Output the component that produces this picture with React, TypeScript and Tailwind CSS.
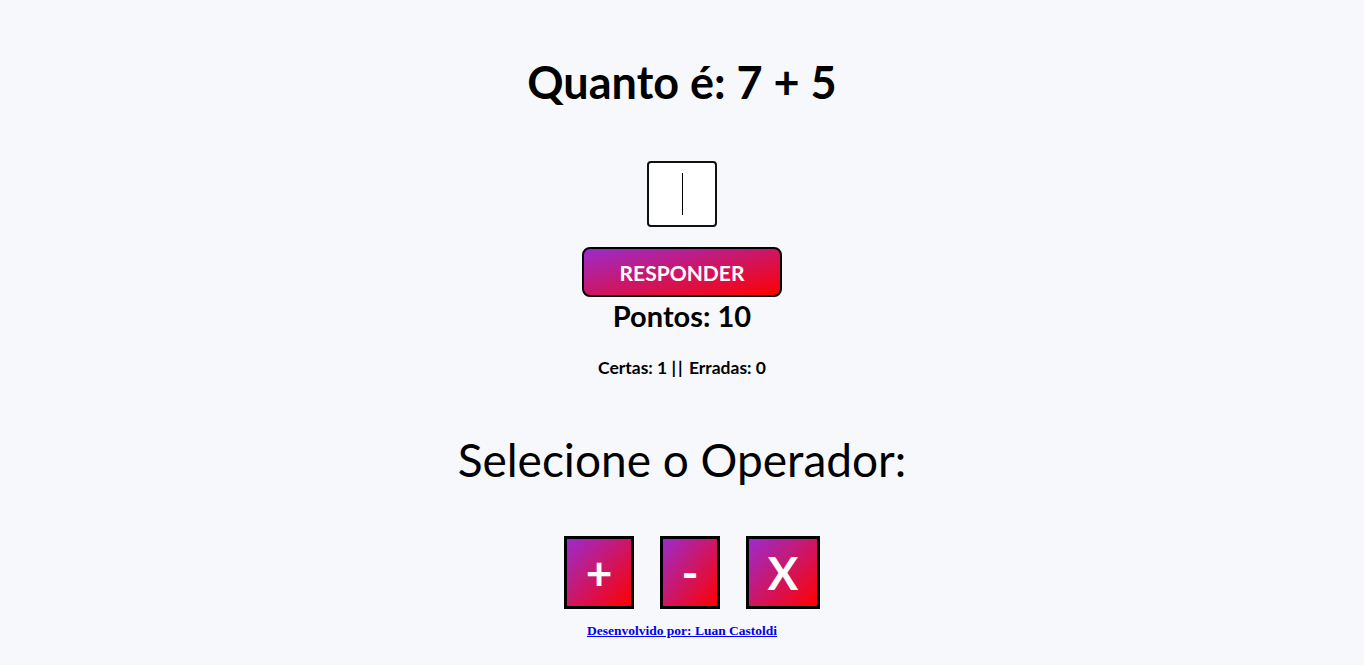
import React from "react";

const OpButton = ({ label, width }: { label: string; width: string }) => {
  return (
    <button
      className={`${width} h-[73px] border-[3px] border-black bg-linear-to-br/srgb from-[#9a2ccc] to-[#ff0000] text-white text-[46px] font-bold leading-none flex items-center justify-center`}
    >
      {label}
    </button>
  );
};

export default function App() {
  return (
    <div className="min-h-screen w-full bg-[#f7f8fc] flex flex-col items-center text-black font-['Lato','Open_Sans',sans-serif]">
      <h1 className="mt-[58px] text-[45px] leading-[48px] font-bold">
        Quanto é: 7 + 5
      </h1>

      <div className="mt-[55px] w-[70px] h-[66px] bg-white border-2 border-[#111] rounded-[4px] flex items-center justify-center">
        <div className="w-px h-[42px] bg-black" />
      </div>

      <button className="mt-[20px] w-[200px] h-[50px] rounded-[8px] border-2 border-black bg-linear-to-br/srgb from-[#9a2ccc] to-[#ff0000] text-white text-[21px] font-bold leading-none flex items-center justify-center">
        RESPONDER
      </button>

      <p className="mt-[3px] text-[29px] leading-[32px] font-bold">Pontos: 10</p>

      <p className="mt-[26px] text-[17.5px] leading-[20px] font-bold">
        Certas: 1 <span className="tracking-[2px]">||</span> Erradas: 0
      </p>

      <h2 className="mt-[55px] text-[46px] leading-[54px] font-normal">
        Selecione o Operador:
      </h2>

      <div className="mt-[49px] ml-[20px] flex items-center gap-[26px]">
        <OpButton label="+" width="w-[70px]" />
        <OpButton label="-" width="w-[60px]" />
        <OpButton label="X" width="w-[74px]" />
      </div>

      <a
        href="#"
        className="mt-[14px] text-[13.5px] leading-[16px] font-bold underline text-[#0000ee] font-['Liberation_Serif',serif]"
      >
        Desenvolvido por: Luan Castoldi
      </a>
    </div>
  );
}
